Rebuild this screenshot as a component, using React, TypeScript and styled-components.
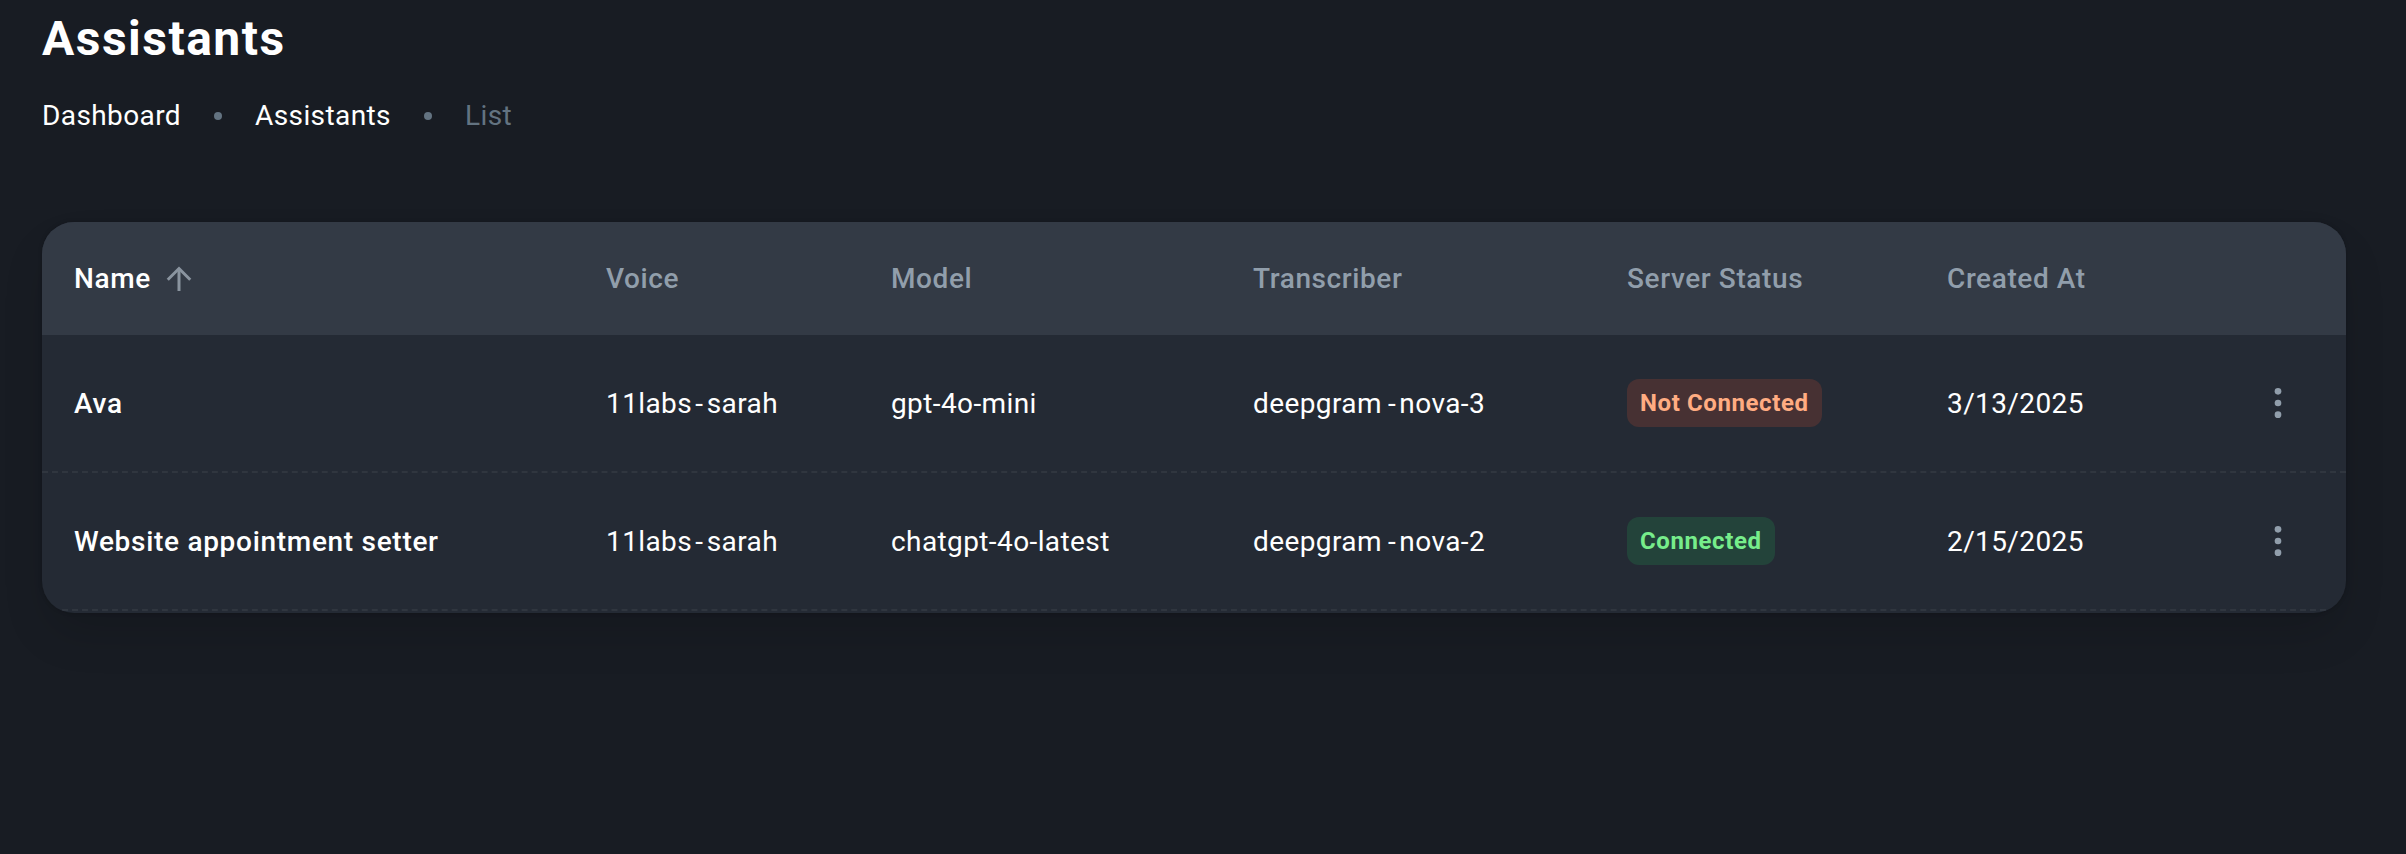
import React from "react";
import styled, { createGlobalStyle, css } from "styled-components";

const GlobalStyle = createGlobalStyle`
  *, *::before, *::after { box-sizing: border-box; }
  html, body { margin: 0; padding: 0; background: #181c23; }
  body {
    font-family: Roboto, "Liberation Sans", Arial, sans-serif;
    color: #ffffff;
    -webkit-font-smoothing: antialiased;
  }
  #root { min-height: 100vh; background: #181c23; }
`;

const Page = styled.main`
  padding: 3px 60px 40px 42px;
`;

const Title = styled.h1`
  margin: 0;
  font-size: 48px;
  line-height: 72px;
  font-weight: 700;
  letter-spacing: 1.5px;
  color: #ffffff;
`;

const Crumbs = styled.ol`
  display: flex;
  align-items: center;
  margin: 20px 0 0;
  padding: 0;
  list-style: none;
  font-size: 28px;
  line-height: 42px;
`;

const Crumb = styled.li<{ $current?: boolean }>`
  color: ${(p) => (p.$current ? "#637381" : "#ffffff")};
  letter-spacing: 0.4px;
`;

const CrumbDot = styled.li`
  width: 8px;
  height: 8px;
  border-radius: 50%;
  background: #637381;
  margin: 0 33px 0 33px;
`;

const Card = styled.section`
  margin-top: 85px;
  background: #242a34;
  border-radius: 32px;
  overflow: hidden;
  padding-bottom: 2px;
  box-shadow: 0 0 4px 0 rgba(0, 0, 0, 0.2), 0 24px 48px -8px rgba(0, 0, 0, 0.16);
`;

const columns = "532px 285px 362px 374px 320px 1fr 136px";

const HeadRow = styled.div`
  display: grid;
  grid-template-columns: ${columns};
  height: 113px;
  background: #333a45;
`;

const HeadCell = styled.div<{ $active?: boolean }>`
  display: flex;
  align-items: center;
  padding: 0 32px;
  font-size: 28px;
  font-weight: 500;
  letter-spacing: 0.6px;
  color: ${(p) => (p.$active ? "#ffffff" : "#919eab")};
`;

const SortIcon = styled.svg`
  width: 36px;
  height: 36px;
  margin-left: 10px;
  color: #8a949f;
  flex: none;
`;

const Row = styled.div`
  display: grid;
  grid-template-columns: ${columns};
  height: 138px;
  border-bottom: 2px dashed #30363f;
`;

const Cell = styled.div<{ $strong?: boolean }>`
  display: flex;
  align-items: center;
  padding: 0 32px;
  font-size: 28px;
  font-weight: ${(p) => (p.$strong ? 500 : 400)};
  letter-spacing: ${(p) => (p.$strong ? "0.7px" : "0.4px")};
  color: #ffffff;
  white-space: nowrap;
`;

const ActionCell = styled(Cell)`
  justify-content: flex-end;
`;

const IconButton = styled.button`
  width: 72px;
  height: 72px;
  border: none;
  border-radius: 50%;
  background: transparent;
  color: #919eab;
  display: flex;
  align-items: center;
  justify-content: center;
  padding: 0;
  cursor: pointer;
`;

const toneStyles = {
  error: css`
    color: #ffac82;
    background: rgba(255, 86, 48, 0.16);
  `,
  success: css`
    color: #77ed8b;
    background: rgba(34, 197, 94, 0.16);
  `,
};

const Badge = styled.span<{ $tone: "error" | "success" }>`
  display: inline-flex;
  align-items: center;
  height: 48px;
  padding: 0 13px;
  border-radius: 12px;
  font-size: 24px;
  font-weight: 700;
  letter-spacing: 0.6px;
  ${(p) => toneStyles[p.$tone]}
`;

type Assistant = {
  name: string;
  voice: string;
  model: string;
  transcriber: string;
  connected: boolean;
  created: string;
};

const data: Assistant[] = [
  {
    name: "Ava",
    voice: "11labs\u200A-\u200Asarah",
    model: "gpt-4o-mini",
    transcriber: "deepgram\u2009-\u200Anova-3",
    connected: false,
    created: "3/13/2025",
  },
  {
    name: "Website appointment setter",
    voice: "11labs\u200A-\u200Asarah",
    model: "chatgpt-4o-latest",
    transcriber: "deepgram\u2009-\u200Anova-2",
    connected: true,
    created: "2/15/2025",
  },
];

const MoreIcon = () => (
  <svg width="40" height="40" viewBox="0 0 24 24" fill="currentColor">
    <circle cx="12" cy="12" r="2" />
    <circle cx="12" cy="5" r="2" />
    <circle cx="12" cy="19" r="2" />
  </svg>
);

export default function App() {
  return (
    <>
      <GlobalStyle />
      <Page>
        <Title>Assistants</Title>
        <Crumbs>
          <Crumb>Dashboard</Crumb>
          <CrumbDot aria-hidden />
          <Crumb>Assistants</Crumb>
          <CrumbDot aria-hidden />
          <Crumb $current>List</Crumb>
        </Crumbs>
        <Card role="table">
          <HeadRow role="row">
            <HeadCell $active role="columnheader">
              Name
              <SortIcon viewBox="0 0 24 24" fill="none" stroke="currentColor" strokeWidth="2">
                <path d="M12 20V5" />
                <path d="M4.5 12.5L12 5l7.5 7.5" />
              </SortIcon>
            </HeadCell>
            <HeadCell role="columnheader">Voice</HeadCell>
            <HeadCell role="columnheader">Model</HeadCell>
            <HeadCell role="columnheader">Transcriber</HeadCell>
            <HeadCell role="columnheader">Server Status</HeadCell>
            <HeadCell role="columnheader">Created At</HeadCell>
            <HeadCell role="columnheader" />
          </HeadRow>
          {data.map((a) => (
            <Row role="row" key={a.name}>
              <Cell $strong>{a.name}</Cell>
              <Cell>{a.voice}</Cell>
              <Cell>{a.model}</Cell>
              <Cell>{a.transcriber}</Cell>
              <Cell>
                <Badge $tone={a.connected ? "success" : "error"}>
                  {a.connected ? "Connected" : "Not Connected"}
                </Badge>
              </Cell>
              <Cell>{a.created}</Cell>
              <ActionCell>
                <IconButton aria-label="More actions">
                  <MoreIcon />
                </IconButton>
              </ActionCell>
            </Row>
          ))}
        </Card>
      </Page>
    </>
  );
}
